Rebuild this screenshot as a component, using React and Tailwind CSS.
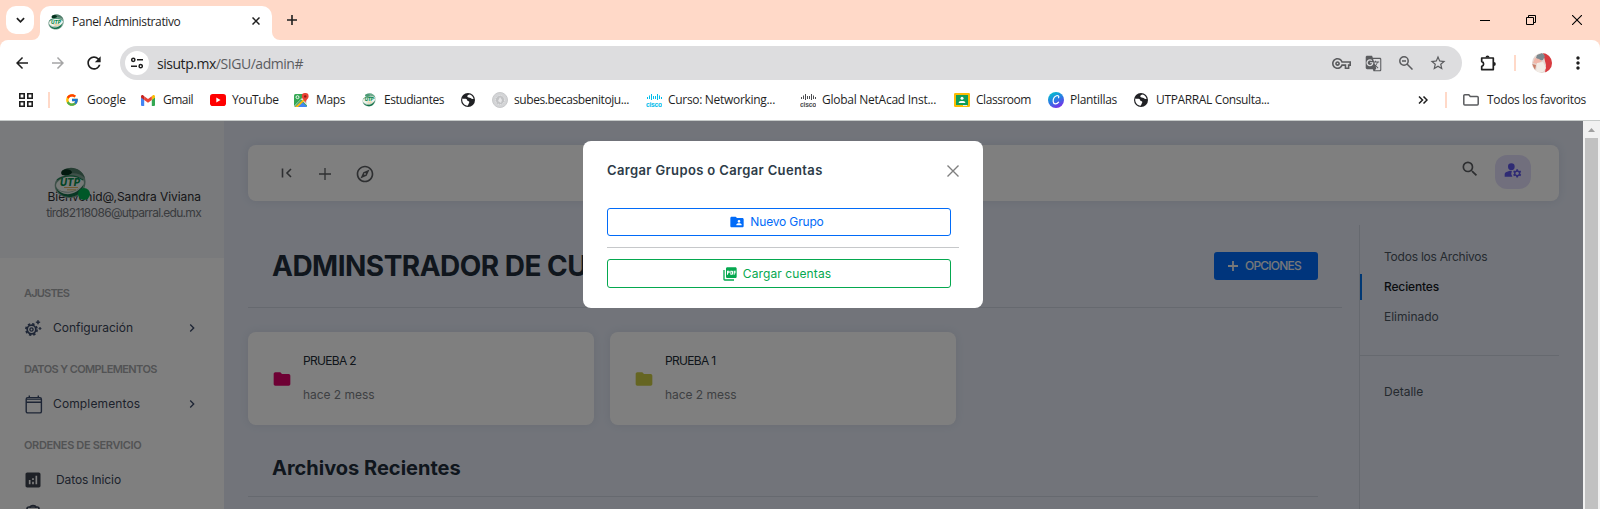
import React from 'react';
import { MdOutlineExplore, MdFolder, MdFolderShared, MdPictureAsPdf, MdAnalytics, MdOutlineVpnKey, MdGTranslate, MdStarBorder, MdRefresh, MdArrowBack, MdArrowForward, MdSearch, MdChevronRight, MdMoreVert, MdManageAccounts } from 'react-icons/md';
import { FcGoogle } from 'react-icons/fc';

function UtpLogo({ className, light }) {
  return (
    <svg viewBox="0 0 32 32" className={className}>
      <path d="M8 4C16-2 31 2 31.500 14c.5 8-5 16-14 17C7 32-1 24 1 16c1-4 5-7 10-7z" fill={light ? '#c5dacf' : '#7fa394'} />
      <path d="M9 3c9-5 19-1 22 8-5-5-13-6-20-3C7 8 6 5 9 3z" fill={light ? '#6aa98a' : '#4f7c69'} />
      <path d="M8 4c3-3 9-2 10 1 0 3-7 4-10 3-1-1-1-3 0-4z" fill={light ? '#4b9a75' : '#05331f'} />
      <ellipse cx="16" cy="17" rx="14" ry="7.500" transform="rotate(-8 16 17)" fill="#eef4f0" />
      <path d="M3 13c7-5 18-6 26 0" fill="none" stroke="#1d8053" strokeWidth="1.200" />
      <path d="M2 20c5 8 20 8 28-4 0 7-6 13-14 14C9 30 4 26 2 20z" fill={light ? '#b9d4c6' : '#dfe8e3'} />
      <path d="M2 20c4 9 19 11 28-3-3 11-9 13-15 13C9 30 3 26 2 20z" fill="#14704a" />
      <text x="6" y="19" fontSize="10" fontWeight="800" fontStyle="italic" fontFamily="Inter, sans-serif" fill="#078a4c" textLength="20" lengthAdjust="spacingAndGlyphs">UTP</text>
      <path d="M10 20.500h14M13 22.800h9" stroke="#e0b562" strokeWidth="1" />
    </svg>
  );
}

function Globe() {
  return (
    <svg viewBox="0 0 14 14" className="size-[14px]">
      <circle cx="7" cy="7" r="7" fill="#202124" />
      <path d="M1.300 5.500c1 .7 2.700 0 4 .6 1.300.5.400 1.700 1.500 1.900 1.600.2 1.900.9 1.200 2.100-.6 1-.4 1.700-1.500 2.600C3.500 12.500.6 9.500 1.300 5.500zM6.300 3.600c-.3-1 .8-2.100 2.600-2.200 2 .8 3.300 2.300 3.700 4.300-1 .9-2 .2-3-.6-1-.7-2.900-.3-3.300-1.500z" fill="#fff" />
      <path d="M8.400 8.600c1 .4 2.500.1 3.700-.4-.4 1.700-1.400 2.900-2.900 3.600.4-1-.1-2-.8-3.200z" fill="#202124" />
    </svg>
  );
}

function Cisco({ className }) {
  return (
    <svg viewBox="0 0 16 13" className={className} fill="currentColor">
      <path d="M1 3h1v2H1zM3 1.500h1V5H3zM5 0h1v6H5zM7 2h1v3H7zM9 2h1v3H9zM11 0h1v6h-1zM13 1.500h1V5h-1zM15 3h1v2h-1z" />
      <text x="0" y="12.500" fontSize="8" fontWeight="700" fontFamily="Liberation Sans, sans-serif" textLength="16" lengthAdjust="spacingAndGlyphs">cisco</text>
    </svg>
  );
}

function Gmail() {
  return (
    <svg viewBox="0 0 14 11" className="h-[11px] w-[14px]">
      <path d="M0 2v8a1 1 0 0 0 1 1h2.200V4.500z" fill="#4285f4" />
      <path d="M14 2v8a1 1 0 0 1-1 1h-2.200V4.500z" fill="#34a853" />
      <path d="M10.800 1.200V5L14 2.600V1.500C14 .2 12.600-.4 11.600.4z" fill="#fbbc04" />
      <path d="M3.200 5V1.200L7 4l3.800-2.800V5L7 7.800z" fill="#ea4335" />
      <path d="M0 1.500V2.600L3.200 5V1.200L2.400.4C1.400-.4 0 .2 0 1.500z" fill="#c5221f" />
    </svg>
  );
}

function YouTube() {
  return (
    <svg viewBox="0 0 16 12" className="h-3 w-4">
      <rect width="16" height="12" rx="2.800" fill="#f00" />
      <path d="M6.300 3.500v5L10.500 6z" fill="#fff" />
    </svg>
  );
}

function Maps() {
  return (
    <svg viewBox="0 0 15 15" className="size-[15px]">
      <rect y="1" width="13" height="13" rx="1.500" fill="#34a853" />
      <path d="M0 13L11.500 1.500 13 3v9.500L7 6.500 0 14z" fill="#dfe3e6" />
      <path d="M7 8l6 5.500a1.500 1.500 0 0 1-1 .5H1z" fill="#4285f4" />
      <path d="M1 14L13 3v2L4 14z" fill="#fbbc04" />
      <circle cx="3.500" cy="4.200" r="1.500" fill="none" stroke="#fff" strokeWidth=".9" />
      <path d="M11.200 0a3.300 3.300 0 0 1 3.400 3.400c0 2.500-2.600 3-3.200 6.300h-.4C10.500 6.400 7.800 5.900 7.800 3.400A3.300 3.300 0 0 1 11.200 0z" fill="#ea4335" />
      <circle cx="11.200" cy="3.400" r="1.200" fill="#8c1a11" />
    </svg>
  );
}

function Seal() {
  return (
    <svg viewBox="0 0 16 16" className="size-4">
      <circle cx="8" cy="8" r="7.500" fill="#d3d4d6" stroke="#c8c9cb" />
      <circle cx="8" cy="8" r="4.500" fill="#c2c3c5" stroke="#ececed" strokeDasharray="1 1" />
      <path d="M6 9l2-4 2 3-1 3z" fill="#e6e6e8" />
    </svg>
  );
}

function Classroom() {
  return (
    <svg viewBox="0 0 16 14" className="h-[14px] w-4">
      <rect width="16" height="14" rx="1.200" fill="#fbbc04" />
      <rect x="2" y="2" width="12" height="10" fill="#0f9d58" />
      <circle cx="8" cy="5.300" r="1.500" fill="#fff" />
      <path d="M4.800 10V9C5 7.500 11 7.500 11.200 9v1z" fill="#fff" />
      <path d="M9 12h4v1H9z" fill="#e8eaed" />
    </svg>
  );
}

function Canva() {
  return (
    <svg viewBox="0 0 16 16" className="size-4">
      <defs>
        <linearGradient id="canva" x1="0.200" y1="0" x2="0.700" y2="1">
          <stop offset="0" stopColor="#00c4cc" />
          <stop offset="0.500" stopColor="#2a7be4" />
          <stop offset="1" stopColor="#7d2ae8" />
        </linearGradient>
      </defs>
      <circle cx="8" cy="8" r="8" fill="url(#canva)" />
      <path d="M10.600 5.800c.7-1.800-.6-2.600-2-2C6.500 4.700 5 7.400 5.200 9.600c.3 3 3.600 3 5.400.6" fill="none" stroke="#fff" strokeWidth="1.200" strokeLinecap="round" />
    </svg>
  );
}

function Sparkgear() {
  return (
    <svg viewBox="0 0 17 17" className="size-[17px]" fill="none" stroke="#3b4b6b">
      <circle cx="6.500" cy="9.500" r="4.300" strokeWidth="1.700" />
      <circle cx="6.500" cy="9.500" r="5.600" strokeWidth="1.700" strokeDasharray="2.400 1.998" />
      <circle cx="6.500" cy="9.500" r="1.600" strokeWidth="1.400" />
      <path d="M13 0l.7 1.500 1.500.7-1.500.7L13 4.400l-.7-1.500-1.500-.7 1.500-.7zM15 7l.4 1 1 .5-1 .4-.4 1-.4-1-1-.4 1-.5z" fill="#3b4b6b" strokeWidth=".5" />
    </svg>
  );
}

function Calendar() {
  return (
    <svg viewBox="0 0 18 19" className="h-[19px] w-[18px]" fill="none" stroke="#3b4b6b" strokeWidth="1.400">
      <rect x="1.200" y="2.700" width="15.200" height="15.200" rx="1.500" />
      <path d="M1.200 7.200h15.200M4.300.5v2.500M13.300.5v2.500" />
      <path d="M1.500 4.500h14.600" strokeWidth=".8" />
    </svg>
  );
}

function Puzzle() {
  return (
    <svg viewBox="0 0 17 17" className="size-[17px]" fill="none" stroke="#1f1f1f" strokeWidth="1.700">
      <path d="M1.700 3h11.600v11.600H1.700v-3.300a2.400 2.400 0 0 0 0-4.700z" strokeLinejoin="round" />
      <path d="M5.500 2.500a2 2 0 0 1 4 0zM13.800 7a2 2 0 0 1 0 4z" fill="#1f1f1f" stroke="none" />
    </svg>
  );
}

function Bookmark({ icon, label, className }) {
  return (
    <div className={'flex h-6 shrink-0 items-center whitespace-nowrap ' + className}>
      <span className="flex w-[22px] shrink-0 items-center">{icon}</span>
      <span>{label}</span>
    </div>
  );
}

function BrowserChrome() {
  return (
    <header className="h-[121px] bg-[#ffd9c8] font-['Open_Sans',sans-serif] text-[12px] text-[#1f1f1f]">
      <div className="flex h-10 pl-1.5">
        <div className="mt-1.5 flex size-7 items-center justify-center rounded-[10px] bg-white">
          <svg viewBox="0 0 10 6" className="h-[6px] w-[9px]" fill="none" stroke="#1f1f1f" strokeWidth="1.900"><path d="M1 1l4 4 4-4" /></svg>
        </div>
        <svg viewBox="0 0 8 8" className="-ml-[2px] mt-8 size-2 fill-white"><path d="M8 0v8H0a8 8 0 0 0 8-8z" /></svg>
        <div className="mt-1.5 flex w-[232px] items-center rounded-t-[10px] bg-white pl-2">
          <UtpLogo className="mb-0.5 size-4" />
          <span className="mb-1 ml-2 flex-1 leading-[17px] tracking-[-0.36px]">Panel Administrativo</span>
          <svg viewBox="0 0 8 8" className="mb-1 mr-3 size-2" stroke="#1f1f1f" strokeWidth="1.500"><path d="M.5.5l7 7M7.500.5l-7 7" /></svg>
        </div>
        <svg viewBox="0 0 8 8" className="mt-8 size-2 fill-white"><path d="M0 0v8h8a8 8 0 0 1-8-8z" /></svg>
        <svg viewBox="0 0 10 10" className="ml-[7px] mt-[15px] size-[10px]" stroke="#1f1f1f" strokeWidth="1.600"><path d="M5 0v10M0 5h10" /></svg>
        <div className="ml-auto flex items-center gap-9 pr-[18px]">
          <svg viewBox="0 0 10 10" className="size-[10px]" stroke="#000"><path d="M0 5.500h10" /></svg>
          <svg viewBox="0 0 10 10" className="size-[10px]" stroke="#000" fill="none"><path d="M.5 2.500h7v7h-7zM2.500 2.500v-2h7v7h-2" /></svg>
          <svg viewBox="0 0 10 10" className="size-[10px]" stroke="#000" strokeWidth="1.100"><path d="M0 0l10 10M10 0L0 10" /></svg>
        </div>
      </div>
      <div className="h-[81px] rounded-t-lg border-b border-[#c6cac9] bg-white">
        <div className="flex h-[46px] items-center">
          <MdArrowBack className="ml-[13px] size-[18px]" />
          <MdArrowForward className="ml-[18px] size-[18px] text-[#a5a5a6]" />
          <MdRefresh className="ml-[17px] size-5" />
          <div className="ml-4 flex h-[34px] w-[1342px] items-center rounded-full bg-[#dddddf] pl-[5px]">
            <div className="flex size-6 items-center justify-center rounded-full bg-white">
              <svg viewBox="0 0 12 12" className="size-3" fill="none" stroke="#1f1f1f" strokeWidth="1.500"><circle cx="2.300" cy="2.800" r="1.600" /><path d="M6 2.800h6M0 9.200h6" /><circle cx="9.700" cy="9.200" r="1.600" /></svg>
            </div>
            <span className="ml-2 text-[14px] tracking-[-0.46px] text-[#5b5c5f]"><span className="text-[#1f1f1f]">sisutp.mx</span>/SIGU/admin#</span>
            <div className="ml-auto flex items-center pr-[15px] text-[#5a5b5e]">
              <MdOutlineVpnKey className="size-[19px]" />
              <MdGTranslate className="ml-[14px] size-[17px]" />
              <svg viewBox="0 0 14 14" className="ml-[17px] size-[14px]" fill="none" stroke="currentColor" strokeWidth="1.500"><circle cx="5" cy="5" r="4.200" /><path d="M8 8l5.500 5.500M3 5h4" /></svg>
              <MdStarBorder className="ml-[16px] size-[18px]" />
            </div>
          </div>
          <div className="ml-[18px] flex w-[18px]"><Puzzle /></div>
          <div className="ml-4 h-4 w-0.5 bg-[#ffd9c8]" />
          <svg viewBox="0 0 20 20" className="ml-4 size-5">
            <clipPath id="avatar"><circle cx="10" cy="10" r="10" /></clipPath>
            <g clipPath="url(#avatar)">
              <path d="M0 0h20v20H0z" fill="#e4d5cf" />
              <path d="M11 0h9v20h-7l1-8z" fill="#d93a3f" />
              <path d="M5 2l5-2 3 3-2 4-4 1-3-3z" fill="#7c8a90" />
              <path d="M3 5l4 1 3 2-4 3-5-1z" fill="#f0b6a8" />
              <path d="M5 10l6-1 3 6-3 4H4z" fill="#f2ece6" />
              <path d="M0 11l4 1-1 5z" fill="#c97f68" />
            </g>
          </svg>
          <MdMoreVert className="ml-4 size-5" />
        </div>
        <div className="flex h-7 items-center">
          <svg viewBox="0 0 14 14" className="ml-[19px] size-[14px]" fill="none" stroke="#1f1f1f" strokeWidth="1.600"><path d="M.8.8h4.400v4.400H.8zM8.800.8h4.400v4.400H8.800zM.8 8.800h4.400v4.400H.8zM8.800 8.800h4.400v4.400H8.800z" /></svg>
          <div className="ml-[15px] mr-4 h-4 w-0.5 bg-[#ffd9c8]" />
          <Bookmark icon={<FcGoogle className="size-[14px]" />} label="Google" className="-ml-[1px] w-[76px] tracking-[-0.07px]" />
          <Bookmark icon={<Gmail />} label="Gmail" className="w-[69px] tracking-[-0.5px]" />
          <Bookmark icon={<YouTube />} label="YouTube" className="w-[84px] tracking-[-0.4px]" />
          <Bookmark icon={<Maps />} label="Maps" className="w-[68px] tracking-[-0.38px]" />
          <Bookmark icon={<UtpLogo light className="h-[14px] w-[14px]" />} label="Estudiantes" className="w-[99px] tracking-[-0.47px]" />
          <Bookmark icon={<Globe />} className="w-[31px]" />
          <Bookmark icon={<Seal />} label="subes.becasbenitoju..." className="w-[154px] tracking-[-0.41px]" />
          <Bookmark icon={<Cisco className="h-[13px] w-4 text-[#00bceb]" />} label="Curso: Networking..." className="w-[154px] tracking-[-0.31px]" />
          <Bookmark icon={<Cisco className="h-[13px] w-4 text-[#4b4c4f]" />} label="Global NetAcad Inst..." className="w-[154px] tracking-[-0.26px]" />
          <Bookmark icon={<Classroom />} label="Classroom" className="w-[94px] tracking-[-0.46px]" />
          <Bookmark icon={<Canva />} label="Plantillas" className="w-[86px] tracking-[-0.3px]" />
          <Bookmark icon={<Globe />} label="UTPARRAL Consulta..." className="tracking-[-0.36px]" />
          <svg viewBox="0 0 10 8" className="ml-auto h-2 w-[10px]" fill="none" stroke="#1f1f1f" strokeWidth="1.500"><path d="M1 .5L4.500 4 1 7.500M5.500.5L9 4 5.500 7.500" /></svg>
          <div className="ml-[17px] h-4 w-0.5 bg-[#ffd9c8]" />
          <svg viewBox="0 0 16 12" className="ml-4 h-3 w-4" fill="none" stroke="#5a5b5e" strokeWidth="1.500"><path d="M.8 10V1.800a1 1 0 0 1 1-1h4L7.300 2.500h6.900a1 1 0 0 1 1 1V10a1 1 0 0 1-1 1H1.800a1 1 0 0 1-1-1z" /></svg>
          <span className="ml-2 mr-[14px] tracking-[-0.34px]">Todos los favoritos</span>
        </div>
      </div>
    </header>
  );
}

function NavTitle({ children, className }) {
  return <div className={'h-[18px] pl-6 text-[11px] leading-[18px] font-semibold whitespace-nowrap text-[#a4a6a9] ' + className}>{children}</div>;
}

function NavItem({ icon, label, arrow, className }) {
  return (
    <div className="flex h-10 items-center pl-[25px] pr-6 text-[#3b4558]">
      <span className="flex w-7 shrink-0">{icon}</span>
      <span className={'flex-1 ' + className}>{label}</span>
      {arrow && <MdChevronRight className="size-4 text-[#3b4b6b]" />}
    </div>
  );
}

function Sidebar() {
  return (
    <aside className="h-[388px] w-56 shrink-0 overflow-hidden bg-white">
      <div className="h-[137px] bg-[#f3f5f8] pt-[46px]">
        <div className="relative ml-[54px] size-8">
          <UtpLogo className="size-8" />
          <span className="absolute top-[21px] left-[24px] size-3 rounded-full bg-[#00b050]" />
        </div>
        <div className="-mt-[10px] pr-[23px] text-right leading-4">
          <div className="tracking-[-0.06px] text-[#2c2d30]">Bienvenid@,Sandra Viviana</div>
          <div className="tracking-[-0.69px] text-[#74777d]">tird82118086@utparral.edu.mx</div>
        </div>
      </div>
      <NavTitle className="mt-[26px] tracking-[-0.81px]">AJUSTES</NavTitle>
      <div className="mt-[6px]"><NavItem arrow icon={<Sparkgear />} label="Configuración" className="tracking-[-0.01px]" /></div>
      <NavTitle className="mt-[12px] tracking-[-0.6px]">DATOS Y COMPLEMENTOS</NavTitle>
      <div className="mt-[6px]"><NavItem arrow icon={<Calendar />} label="Complementos" className="tracking-[0.13px]" /></div>
      <NavTitle className="mt-[12px] tracking-[-0.35px]">ORDENES DE SERVICIO</NavTitle>
      <div className="mt-[6px]"><NavItem icon={<MdAnalytics className="-ml-0.5 size-5 text-[#3d424e]" />} label="Datos Inicio" className="pl-[3px] tracking-[-0.11px]" /></div>
      <svg viewBox="0 0 18 18" className="ml-6 mt-[4px] size-[18px]" fill="none" stroke="#3b4558" strokeWidth="1.700"><rect x="3" y="3" width="12" height="13" rx="2" /><path d="M6 4a3 2.500 0 0 1 6 0M6 7h6" /></svg>
    </aside>
  );
}

function FolderCard({ name, color }) {
  return (
    <div className="flex h-[93px] w-[346px] items-center rounded-lg bg-white pl-6 shadow-[0_0_10px_rgba(60,80,100,0.10)]">
      <MdFolder className={'size-5 ' + color} />
      <div className="ml-[11px] flex h-full flex-col justify-between pt-[20px] pb-[21px] leading-[18px]">
        <span className="tracking-[-0.68px] text-[#212b36]">{name}</span>
        <span className="tracking-[-0.04px] text-[#7d8186]">hace 2 mess</span>
      </div>
    </div>
  );
}

function Main() {
  return (
    <main className="h-[388px] flex-1 overflow-hidden pl-6 pt-6">
      <div className="flex h-14 w-[1311px] items-center rounded-lg bg-white pl-7 pr-7 text-[#5c5f63] shadow-[0_0_10px_rgba(60,80,120,0.12)]">
        <svg viewBox="0 0 12 10" className="ml-[5px] h-[10px] w-3" fill="none" stroke="currentColor" strokeWidth="1.600"><path d="M1.500.5v9M10 1L6 5l4 4" /></svg>
        <svg viewBox="0 0 12 12" className="ml-[26px] mt-px size-3" stroke="currentColor" strokeWidth="1.300"><path d="M6 0v12M0 6h12" /></svg>
        <MdOutlineExplore className="ml-6 mt-px size-5" />
        <MdSearch className="mb-2 ml-auto size-5" />
        <div className="mb-0.5 ml-[15px] flex h-[34px] w-9 items-center justify-center rounded-[12px] bg-[#e3dffa] text-[#5f57e8]">
          <MdManageAccounts className="mb-1 size-5" />
        </div>
      </div>
      <div className="mt-6 flex h-[284px]">
        <div className="w-[1111px]">
          <div className="flex h-[83px] w-[1094px] items-center justify-between border-b border-[#cdd2de] pl-6 pr-6">
            <h1 className="-mt-px text-[28px] font-bold tracking-[-0.52px] whitespace-nowrap text-[#202c3a]">ADMINSTRADOR DE CUENTAS</h1>
            <div className="flex h-7 w-[104px] items-center rounded-[3px] bg-[#016bf8] pb-px pl-[14px] font-medium tracking-[-0.78px] text-[#eef0f3]">
              <svg viewBox="0 0 10 10" className="mr-[7px] size-[10px]" stroke="currentColor" strokeWidth="1.800"><path d="M5 0v10M0 5h10" /></svg>
              OPCIONES
            </div>
          </div>
          <div className="mt-6 flex gap-4">
            <FolderCard name="PRUEBA 2" color="text-[#dc0069]" />
            <FolderCard name="PRUEBA 1" color="text-[#caca45]" />
          </div>
          <h2 className="mt-[28px] h-[44px] w-[1070px] border-b border-[#cdd2de] pl-6 text-[20px] leading-[30px] font-bold text-[#202c3a]">Archivos Recientes</h2>
        </div>
        <div className="w-[200px] border-l border-[#cdd2de] pt-[17px] text-[#4a545e]">
          <div className="h-[30px] pl-6 leading-[30px] tracking-[-0.23px]">Todos los Archivos</div>
          <div className="flex h-[30px] items-center">
            <div className="h-[26px] w-0.5 bg-[#0070e8]" />
            <span className="pl-[22px] font-medium tracking-[-0.15px] text-[#14181d]">Recientes</span>
          </div>
          <div className="h-[54px] border-b border-[#cdd2de] pl-6 leading-[30px]">Eliminado</div>
          <div className="mt-[21px] pl-6 leading-[30px]">Detalle</div>
        </div>
      </div>
    </main>
  );
}

function Modal() {
  return (
    <div className="absolute inset-y-0 left-0 flex w-[1583px] items-start bg-black/50 pl-[583px] pt-5">
      <div className="h-[167px] w-[400px] rounded-lg bg-white px-6 pt-[18px] text-[12px]">
        <div className="flex h-6 items-center justify-between">
          <h5 className="text-[13px] font-semibold tracking-[0.36px] text-[#2d3b48]">Cargar Grupos o Cargar Cuentas</h5>
          <svg viewBox="0 0 12 12" className="size-3" stroke="#7f7f7f" strokeWidth="1.400"><path d="M.5.500l11 11M11.500.5l-11 11" /></svg>
        </div>
        <button className="mt-[25px] flex h-7 w-[344px] items-center justify-center rounded-[3px] border border-[#016bf8] pr-[5px] tracking-[-0.16px] text-[#016bf8]">
          <MdFolderShared className="mr-[5px] size-4" />Nuevo Grupo
        </button>
        <div className="mt-[11px] h-px bg-[#c6c8ca]" />
        <button className="mt-[11px] flex h-[29px] w-[344px] items-center justify-center rounded-[3px] border border-[#05a84f] pr-[5px] tracking-[0.1px] text-[#05a84f]">
          <MdPictureAsPdf className="mr-[5px] size-4" />Cargar cuentas
        </button>
      </div>
    </div>
  );
}

export default function App() {
  return (
    <div className="h-[509px] w-[1600px] overflow-hidden">
      <BrowserChrome />
      <div className="relative flex h-[388px] bg-[#e4e9f5] font-[Inter,sans-serif] text-[12px]">
        <Sidebar />
        <Main />
        <Modal />
        <div className="flex w-[17px] flex-col items-center bg-[#f1f1f1]">
          <svg viewBox="0 0 17 17" className="size-[17px]"><path d="M5 11h7L8.500 7z" fill="#a0a0a0" /></svg>
          <div className="w-[13px] flex-1 bg-[#c1c1c1]" />
        </div>
      </div>
    </div>
  );
}
